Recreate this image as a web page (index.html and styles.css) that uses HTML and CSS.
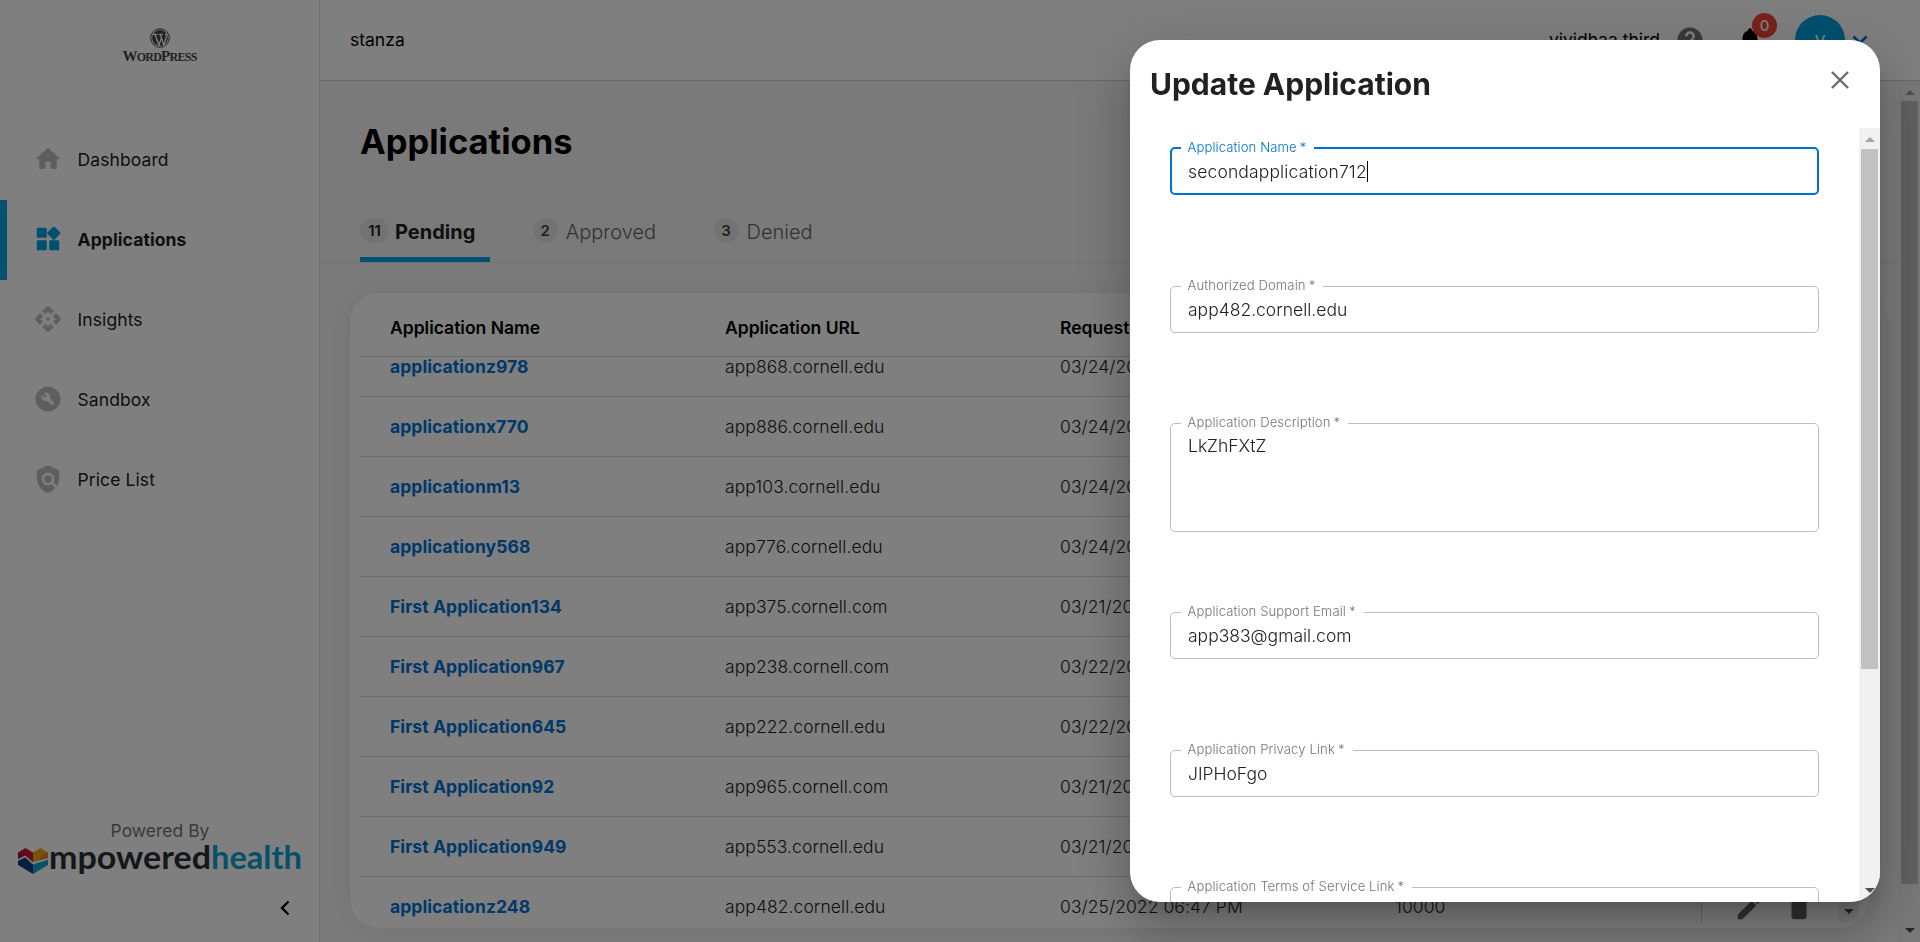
FILE: index.html
```html
<!DOCTYPE html>
<html lang="en">
<head>
<meta charset="utf-8">
<title>Applications</title>
<link rel="stylesheet" href="styles.css">
</head>
<body>
<div class="app">
  <aside class="sidebar">
    <div class="brand">
      <svg class="brand-mark" viewBox="0 0 20 20"><circle cx="10" cy="10" r="9.3" fill="none" stroke="#464342" stroke-width="1"/><circle cx="10" cy="10" r="7.9" fill="#464342"/><path d="M3.2 6.3h4.6M5 6.5l3.9 10.7 2.3-6.6M9 6.3h4M10.2 6.5l3.6 10.2 2.5-7.3c.6-1.8-.9-2.500-.6-4" fill="none" stroke="#fff" stroke-width="1.3"/></svg>
      <span class="brand-name">W<small>ORD</small>P<small>RESS</small></span>
    </div>
    <nav class="nav">
      <a class="nav-item"><svg class="nav-icon" viewBox="0 0 24 24"><path d="M10 19v-5h4v5c0 .55.45 1 1 1h3c.55 0 1-.45 1-1v-7h1.700c.46 0 .68-.57.33-.87L12.670 3.600c-.38-.34-.96-.34-1.340 0l-8.360 7.530c-.34.3-.13.87.33.87H5v7c0 .55.45 1 1 1h3c.55 0 1-.45 1-1z"/></svg>Dashboard</a>
      <a class="nav-item active"><svg class="nav-icon" viewBox="0 0 24 24"><path d="M13 14v6c0 .55.45 1 1 1h6c.55 0 1-.45 1-1v-6c0-.55-.45-1-1-1h-6c-.55 0-1 .45-1 1zm-9 7h6c.55 0 1-.45 1-1v-6c0-.55-.45-1-1-1H4c-.55 0-1 .45-1 1v6c0 .55.45 1 1 1zM3 4v6c0 .55.45 1 1 1h6c.55 0 1-.45 1-1V4c0-.55-.45-1-1-1H4c-.55 0-1 .45-1 1zm12.950-1.600L11.700 6.640c-.39.39-.39 1.020 0 1.410l4.250 4.250c.39.39 1.020.39 1.410 0l4.250-4.250c.39-.39.39-1.020 0-1.410L17.370 2.400c-.39-.39-1.030-.39-1.420 0z"/></svg>Applications</a>
      <a class="nav-item"><svg class="nav-icon" viewBox="0 0 24 24"><path d="M13 13c-.55.55-1.450.55-2 0s-.55-1.450 0-2 1.450-.55 2 0 .55 1.450 0 2zm-1-7 2.120 2.120 2.500-2.500-3.200-3.200c-.78-.78-2.050-.78-2.830 0l-3.200 3.200 2.500 2.500L12 6zm-6 6 2.120-2.120-2.500-2.500-3.200 3.200c-.78.78-.78 2.050 0 2.830l3.200 3.200 2.500-2.500L6 12zm12 0-2.120 2.120 2.500 2.500 3.200-3.200c.78-.78.78-2.050 0-2.830l-3.200-3.200-2.500 2.500L18 12zm-6 6-2.120-2.120-2.500 2.500 3.200 3.200c.78.78 2.050.78 2.830 0l3.200-3.200-2.500-2.500L12 18z"/></svg>Insights</a>
      <a class="nav-item"><svg class="nav-icon" viewBox="0 0 24 24"><path fill-rule="evenodd" d="M12 2C6.480 2 2 6.480 2 12s4.480 10 10 10 10-4.480 10-10S17.520 2 12 2zm4.900 13.490-1.400 1.400c-.2.200-.51.200-.71 0l-3.410-3.410c-1.220.43-2.640.170-3.620-.81-1.110-1.110-1.300-2.790-.59-4.100l2.350 2.350 1.410-1.410-2.350-2.350c1.320-.71 2.990-.52 4.100.59.98.98 1.240 2.400.81 3.620l3.410 3.410c.19.190.19.510 0 .71z"/></svg>Sandbox</a>
      <a class="nav-item"><svg class="nav-icon" viewBox="0 0 24 24"><path d="M20.400 4.700 12.800 1.350a2 2 0 0 0-1.600 0L3.600 4.700A1 1 0 0 0 3 5.600V11c0 5.550 3.840 10.740 9 12 2.300-.56 4.330-1.900 5.880-3.710l-3.120-3.120c-1.940 1.290-4.580 1.070-6.290-.64-1.950-1.950-1.950-5.120 0-7.070s5.120-1.950 7.070 0c1.710 1.710 1.920 4.350.64 6.290l2.900 2.900C20.290 15.690 21 13.380 21 11V5.600a1 1 0 0 0-.6-.9z"/><circle cx="12" cy="12" r="3"/></svg>Price List</a>
    </nav>
    <footer class="powered">
      <span class="powered-label">Powered By</span>
      <svg class="powered-logo" viewBox="0 0 284 32">
        <path d="M0 8.500 7.500 4 15 8.500V18L0 15z" fill="#c8143c"/><path d="M0 8.500l7.500 4.500L0 16z" fill="#a01236"/>
        <path d="M15 8.500 22.500 4 30 8.500v6L15 18z" fill="#f5a60f"/><path d="M22.500 12 30 8.500V15l-7.500 2z" fill="#e0812c"/>
        <path d="M0 16.500 6.500 13.500 15 20.500V30L0 21z" fill="#123f80"/><path d="M30 15.500V21L15 30v-9.500z" fill="#14a0d2"/>
        <path d="M0 16 7 12.500l8 6.500 15-4" fill="none" stroke="#fff" stroke-width="1.500"/>
        <text x="31" y="24.500" textLength="162" lengthAdjust="spacingAndGlyphs" class="word dark">mpowered</text><text x="193" y="24.500" textLength="91" lengthAdjust="spacingAndGlyphs" class="word blue">health</text>
      </svg>
    </footer>
    <svg class="collapse" viewBox="0 0 10 16"><path d="M8.500 1.500 2 8l6.500 6.500" fill="none" stroke="#000" stroke-width="2.400"/></svg>
  </aside>

  <div class="page">
    <header class="topbar">
      <span class="raised">stanza</span>
      <div class="account">
        <span class="raised">vividhaa third</span>
        <svg class="help" viewBox="0 0 24 24"><path d="M12 2C6.480 2 2 6.480 2 12s4.480 10 10 10 10-4.480 10-10S17.520 2 12 2zm1 17h-2v-2h2v2zm2.070-7.750l-.9.920C13.450 12.900 13 13.500 13 15h-2v-.5c0-1.100.45-2.100 1.170-2.830l1.240-1.260c.37-.36.59-.86.59-1.410 0-1.100-.9-2-2-2s-2 .9-2 2H8c0-2.210 1.790-4 4-4s4 1.790 4 4c0 .88-.36 1.680-.93 2.250z"/></svg>
        <div class="bell"><svg viewBox="0 0 24 24"><path d="M12 22c1.100 0 2-.9 2-2h-4c0 1.100.89 2 2 2zm6-6v-5c0-3.070-1.640-5.640-4.500-6.320V4c0-.83-.67-1.500-1.500-1.500s-1.500.67-1.500 1.500v.68C7.630 5.360 6 7.920 6 11v5l-2 2v1h16v-1l-2-2z"/></svg><span class="count">0</span></div>
        <span class="avatar">v</span>
        <svg class="chev" viewBox="0 0 16 10"><path d="M1.500 1.500 8 8l6.500-6.500" fill="none" stroke="#0070d2" stroke-width="2.600"/></svg>
      </div>
    </header>
    <div class="body">
      <main class="main">
        <h1>Applications</h1>
        <div class="tabs">
          <div class="tab selected"><span class="pill">11</span>Pending</div>
          <div class="tab"><span class="pill">2</span>Approved</div>
          <div class="tab"><span class="pill">3</span>Denied</div>
        </div>
        <section class="card">
          <div class="row head"><span>Application Name</span><span>Application URL</span><span>Requested Date</span><span></span></div>
          <div class="table-body">
            <div class="rows">
              <div class="row first"><a>applicationz978</a><span>app868.cornell.edu</span><span>03/24/2022 06:47 PM</span><span>10000</span></div>
              <div class="row"><a>applicationx770</a><span>app886.cornell.edu</span><span>03/24/2022 06:47 PM</span><span>10000</span></div>
              <div class="row"><a>applicationm13</a><span>app103.cornell.edu</span><span>03/24/2022 06:47 PM</span><span>10000</span></div>
              <div class="row"><a>applicationy568</a><span>app776.cornell.edu</span><span>03/24/2022 06:47 PM</span><span>10000</span></div>
              <div class="row"><a>First Application134</a><span>app375.cornell.com</span><span>03/21/2022 06:47 PM</span><span>10000</span></div>
              <div class="row"><a>First Application967</a><span>app238.cornell.com</span><span>03/22/2022 06:47 PM</span><span>10000</span></div>
              <div class="row"><a>First Application645</a><span>app222.cornell.edu</span><span>03/22/2022 06:47 PM</span><span>10000</span></div>
              <div class="row"><a>First Application92</a><span>app965.cornell.com</span><span>03/21/2022 06:47 PM</span><span>10000</span></div>
              <div class="row"><a>First Application949</a><span>app553.cornell.edu</span><span>03/21/2022 06:47 PM</span><span>10000</span></div>
              <div class="row"><a>applicationz248</a><span>app482.cornell.edu</span><span>03/25/2022 06:47 PM</span><span>10000</span>
                <div class="actions"><svg viewBox="0 0 24 24"><path d="M3 17.460v3.040c0 .28.220.5.5.5h3.040c.13 0 .26-.05.35-.15L17.810 9.940l-3.750-3.750L3.150 17.100c-.1.100-.15.220-.15.360zM20.710 7.040c.39-.39.39-1.020 0-1.410l-2.340-2.340c-.39-.39-1.020-.39-1.410 0l-1.830 1.830 3.750 3.750 1.830-1.830z"/></svg><svg viewBox="0 0 24 24"><path d="M6 19c0 1.100.9 2 2 2h8c1.100 0 2-.9 2-2V7H6v12zM19 4h-3.500l-1-1h-5l-1 1H5v2h14V4z"/></svg></div>
              </div>
            </div>
            <div class="scrollbar"><i class="up"></i><i class="thumb thumb-table"></i><i class="down"></i></div>
          </div>
        </section>
      </main>
      <div class="scrollbar"><i class="up"></i><i class="thumb thumb-page"></i><i class="down"></i></div>
    </div>
  </div>
</div>

<div class="backdrop">
  <section class="dialog">
    <header class="dialog-head"><h2>Update Application</h2><svg class="close" viewBox="0 0 18 18"><path d="M1 1l16 16M17 1 1 17" fill="none" stroke="#6b6b6b" stroke-width="2.400"/></svg></header>
    <div class="dialog-body">
      <form class="form">
        <fieldset class="field focus"><legend>Application Name<b>*</b></legend><span class="value">secondapplication712</span><i class="caret"></i></fieldset>
        <fieldset class="field domain"><legend>Authorized Domain<b>*</b></legend><span class="value">app482.cornell.edu</span></fieldset>
        <fieldset class="field area"><legend>Application Description<b>*</b></legend><span class="value">LkZhFXtZ</span></fieldset>
        <fieldset class="field email"><legend>Application Support Email<b>*</b></legend><span class="value">app383@gmail.com</span></fieldset>
        <fieldset class="field"><legend>Application Privacy Link<b>*</b></legend><span class="value">JIPHoFgo</span></fieldset>
        <fieldset class="field"><legend>Application Terms of Service Link<b>*</b></legend><span class="value"></span></fieldset>
      </form>
      <div class="scrollbar"><i class="up"></i><i class="thumb thumb-dialog"></i><i class="down"></i></div>
    </div>
  </section>
</div>
</body>
</html>
```
FILE: styles.css
```css
* { box-sizing: border-box; }
body { margin: 0; height: 942px; overflow: hidden; font-family: Inter, "Liberation Sans", sans-serif; font-size: 17.5px; color: #212121; }
h1, h2 { margin: 0; }
svg { display: block; flex: none; }

.app { display: flex; height: 942px; background: #fff; }
.sidebar { width: 320px; flex: none; border-right: 1px solid #e0e0e0; display: flex; flex-direction: column; }
.brand { height: 120px; padding-top: 28px; display: flex; flex-direction: column; align-items: center; }
.brand-mark { width: 20px; height: 20px; }
.brand-name { font: 15px/16px "Liberation Serif", serif; color: #464342; font-weight: 700; letter-spacing: -.75px; }
.brand-name small { font-size: 12px; }
.nav-item { height: 80px; display: flex; align-items: center; padding: 0 0 2px 26px; gap: 14.500px; border-left: 7px solid transparent; color: #212121; letter-spacing: .1px; }
.nav-icon { width: 30px; height: 30px; fill: #bdbdbd; }
.nav-item.active { border-color: #00a1df; font-weight: 700; }
.nav-item.active .nav-icon { fill: #00a1df; }
.powered { margin-top: auto; padding: 0 17px 0 18px; display: flex; flex-direction: column; align-items: center; color: #757575; }
.powered-label { line-height: 24px; }
.powered-logo { width: 284px; height: 32px; margin-top: 1px; overflow: visible; }
.word { font: 700 32px Lato, sans-serif; }
.dark { fill: #2b3035; }
.blue { fill: #0fa0d2; }
.collapse { width: 10px; height: 16px; margin: 24px 29px 26px auto; }

.page { flex: 1; display: flex; flex-direction: column; min-width: 0; }
.topbar { height: 81px; flex: none; border-bottom: 1px solid #d0d0d0; padding: 0 52px 0 30px; display: flex; align-items: center; justify-content: space-between; color: #000; }
.raised { padding-bottom: 2px; }
.account { display: flex; align-items: center; }
.help { width: 30px; height: 30px; fill: #757575; margin-left: 15px; }
.bell { position: relative; margin: 0 30px; width: 30px; }
.bell svg { width: 30px; height: 30px; }
.count { position: absolute; left: 17px; top: -12px; width: 25px; height: 25px; border-radius: 50%; background: #f44336; color: #fff; font-size: 15px; line-height: 25px; text-align: center; font-weight: 500; }
.avatar { width: 50px; height: 50px; border-radius: 50%; background: #00a1df; color: #fff; text-align: center; font-size: 20px; line-height: 48px; }
.chev { width: 16px; height: 10px; margin-left: 7px; }
.body { flex: 1; display: flex; background: #f5f5f5; min-height: 0; }
.main { flex: 1; min-width: 0; }
h1 { font-size: 34.500px; font-weight: 700; line-height: 44px; padding: 39px 40px 0; color: #000; }
.tabs { display: flex; gap: 42.500px; height: 58px; margin-top: 41px; padding-left: 40px; border-bottom: 1px solid #e6e6e6; font-size: 20px; font-weight: 300; color: #666; }
.tab { display: flex; height: 57px; align-items: flex-start; padding-top: 13px; gap: 8px; line-height: 28px; padding-right: 15px; }
.tab.selected { border-bottom: 5px solid #00a1df; font-weight: 700; color: #212121; gap: 6px; }
.pill { min-width: 25px; height: 25px; padding: 0 7px; border-radius: 13px; background: #e6e6e6; color: #424242; font-size: 15px; line-height: 25px; font-weight: 600; text-align: center; }
.selected .pill { color: #212121; min-width: 29px; }
.card { margin: 30px 30px 0 30px; height: 635px; border-radius: 30px; background: #fff; box-shadow: 0 0 30px rgba(0,0,0,.06); padding: 0 10px 5px; display: flex; flex-direction: column; }
.row { height: 60px; flex: none; padding-left: 30px; border-bottom: 1px solid #d8d8d8; display: grid; grid-template-columns: 335px 335px 335px 306px 1fr; align-items: center; font-weight: 300; letter-spacing: .07px; }
.row a { color: #0070d2; font-weight: 700; }
.head { height: 64px; padding-top: 5px; font-weight: 600; color: #000; letter-spacing: 0; }
.table-body { flex: 1; display: flex; overflow: hidden; min-height: 0; }
.rows { flex: 1; overflow: hidden; }
.rows .first { margin-top: -20px; }
.actions { display: flex; gap: 20px; padding: 3px 0 0 32px; border-left: 1px solid #ccc; height: 59px; align-items: center; fill: #616161; }
.actions svg { width: 30px; height: 30px; }

.scrollbar { width: 21px; flex: none; background: #f1f1f1; display: flex; flex-direction: column; align-items: center; }
.up, .down { width: 0; height: 0; border: 5px solid transparent; }
.up { border-top: 0; border-bottom-color: #a3a3a3; margin-top: 9px; }
.down { border-bottom: 0; border-top-color: #505050; margin: auto 0 9px; }
.thumb { width: 17px; background: #c1c1c1; margin-top: 7px; }
.thumb-page { height: 783px; margin-top: 6px; }
.thumb-table { height: 200px; }
.thumb-dialog { height: 520px; }

.backdrop { position: fixed; inset: 0; background: rgba(0,0,0,.5); padding: 40px 40px 0 1130px; }
.dialog { width: 750px; height: 862px; background: #fff; border-radius: 30px; overflow: hidden; display: flex; flex-direction: column; box-shadow: 0 14px 19px -9px rgba(0,0,0,.2), 0 30px 48px 4px rgba(0,0,0,.14), 0 11px 58px 10px rgba(0,0,0,.12); }
.dialog-head { height: 88px; flex: none; padding: 0 31px 0 20px; display: flex; justify-content: space-between; align-items: center; }
h2 { font-size: 30px; font-weight: 700; }
.close { width: 18px; height: 18px; margin-bottom: 8px; }
.dialog-body { flex: 1; display: flex; min-height: 0; }
.form { flex: 1; padding: 12px 40px 0; overflow: hidden; }
.field { margin: 0 0 82px; padding: 0 17px; height: 55px; border: 1px solid #bdbdbd; border-radius: 5px; display: flex; align-items: flex-start; min-width: 0; }
.field legend { margin-left: -7px; padding: 0 8px 0 6.500px; font-size: 13.1px; line-height: 15px; height: 16px; letter-spacing: .1px; color: #757575; font-weight: 300; }
.field legend b { font-weight: 300; margin-left: 3px; }
.value { font-weight: 300; line-height: 20px; padding-top: 6px; }
.field.area { height: 117px; margin-bottom: 72px; }
.area .value { padding-top: 5px; }
.field.email { margin-bottom: 83px; }
.field.focus { border: 2px solid #0070d2; padding: 0 16px; margin-bottom: 83px; }
.field.focus legend { color: #0070d2; }
.focus .value { letter-spacing: .14px; }
.caret { width: 1px; height: 21px; background: #000; margin-top: 5px; }
```
